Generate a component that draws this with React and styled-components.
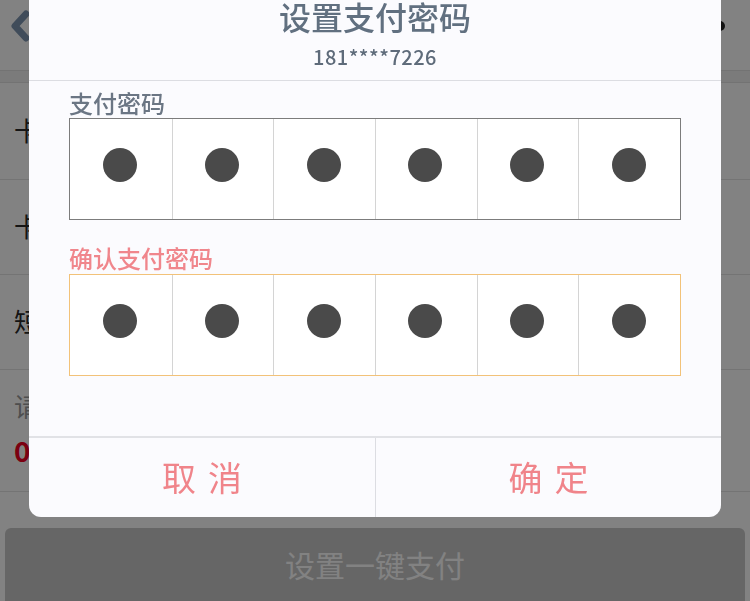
import styled, { createGlobalStyle } from 'styled-components'

const GlobalStyle = createGlobalStyle`
  html, body {
    margin: 0;
    padding: 0;
    background: #ffffff;
    font-family: "Noto Sans CJK SC", "Noto Sans", sans-serif;
  }
`

const FONT = '"Noto Sans CJK SC", "Noto Sans", sans-serif'

function BackIcon() {
  return (
    <svg width="22" height="32" viewBox="0 0 22 32">
      <path
        d="M16 4 L5 16 L16 28"
        fill="none"
        stroke="#7e95b0"
        strokeWidth="7"
        strokeLinecap="round"
        strokeLinejoin="round"
      />
    </svg>
  )
}

function PinBox({ tone, count = 6 }) {
  return (
    <Box tone={tone}>
      {Array.from({ length: count }).map((_, i) => (
        <Cell key={i}>
          <Dot />
        </Cell>
      ))}
    </Box>
  )
}

export default function App() {
  return (
    <>
      <GlobalStyle />
      <Page>
        <TopBar>
          <BackIcon />
          <MenuDot />
        </TopBar>
        <Band />
        <Row height={97}>
          <RowText>卡号</RowText>
        </Row>
        <Row height={95}>
          <RowText>卡类型</RowText>
        </Row>
        <Row height={95}>
          <RowText>短信验证码</RowText>
        </Row>
        <Row height={122} stacked>
          <RowText muted>请确认支付金额</RowText>
          <Amount>0.01</Amount>
        </Row>
        <SubmitButton>设置一键支付</SubmitButton>
      </Page>

      <Overlay>
        <Modal>
          <ModalHeader>
            <Title>设置支付密码</Title>
            <Phone>181****7226</Phone>
          </ModalHeader>
          <ModalBody>
            <Label>支付密码</Label>
            <PinBox tone="plain" />
            <Label tone="alert" gap={23}>
              确认支付密码
            </Label>
            <PinBox tone="focus" />
          </ModalBody>
          <Footer>
            <FooterButton>取消</FooterButton>
            <FooterButton>确定</FooterButton>
          </Footer>
        </Modal>
      </Overlay>
    </>
  )
}

const Page = styled.div`
  width: 750px;
  height: 601px;
  overflow: hidden;
  display: flex;
  flex-direction: column;
  background: #ffffff;
  font-family: ${FONT};
`

const TopBar = styled.div`
  height: 70px;
  flex: none;
  display: flex;
  align-items: center;
  justify-content: space-between;
  padding: 0 25px 18px 10px;
  box-sizing: border-box;
`

const MenuDot = styled.div`
  width: 10px;
  height: 10px;
  border-radius: 50%;
  background: #222;
`

const Band = styled.div`
  height: 11px;
  flex: none;
  background: #f1f1f1;
  border-top: 1px solid #e2e2e2;
  border-bottom: 1px solid #e2e2e2;
`

const Row = styled.div`
  height: ${({ height }) => height}px;
  flex: none;
  box-sizing: border-box;
  border-bottom: 1px solid #e4e4e4;
  padding: 0 14px 4px;
  display: flex;
  flex-direction: ${({ stacked }) => (stacked ? 'column' : 'row')};
  justify-content: ${({ stacked }) => (stacked ? 'center' : 'flex-start')};
  align-items: ${({ stacked }) => (stacked ? 'flex-start' : 'center')};
`

const RowText = styled.span`
  font-size: 26px;
  color: ${({ muted }) => (muted ? '#9a9a9a' : '#2a2a2a')};
`

const Amount = styled.span`
  font-size: 28px;
  font-weight: 700;
  color: #f20022;
  margin-top: 6px;
`

const SubmitButton = styled.div`
  margin: 36px 5px 0;
  height: 80px;
  flex: none;
  border-radius: 6px;
  background: #c8c8c8;
  color: #ffffff;
  font-size: 30px;
  display: flex;
  align-items: center;
  justify-content: center;
  padding-bottom: 8px;
  box-sizing: border-box;
`

const Overlay = styled.div`
  position: fixed;
  inset: 0;
  background: rgba(0, 0, 0, 0.49);
  display: flex;
  justify-content: center;
  align-items: flex-end;
  padding-bottom: 84px;
  box-sizing: border-box;
`

const Modal = styled.div`
  width: 692px;
  background: #fbfbfe;
  border-radius: 0 0 12px 12px;
  overflow: hidden;
  font-family: ${FONT};
`

const ModalHeader = styled.div`
  height: 81px;
  box-sizing: border-box;
  border-bottom: 1px solid #dcdde2;
  display: flex;
  flex-direction: column;
  align-items: center;
`

const Title = styled.div`
  font-size: 32px;
  line-height: 32px;
  font-weight: 500;
  color: #617080;
`

const Phone = styled.div`
  margin-top: 13px;
  font-size: 20px;
  line-height: 24px;
  font-weight: 500;
  letter-spacing: 0.5px;
  color: #5e6b7a;
`

const ModalBody = styled.div`
  padding: 7px 40px 60px;
`

const Label = styled.div`
  margin-top: ${({ gap }) => gap || 0}px;
  font-size: 24px;
  line-height: 30px;
  font-weight: 500;
  color: ${({ tone }) => (tone === 'alert' ? '#f0868c' : '#6b7684')};
`

const Box = styled.div`
  display: grid;
  grid-template-columns: repeat(6, 1fr);
  height: 102px;
  box-sizing: border-box;
  margin-top: ${({ tone }) => (tone === 'focus' ? 1 : 0)}px;
  border: 1px solid ${({ tone }) => (tone === 'focus' ? '#f2c279' : '#7c7c7c')};
  background: #ffffff;
`

const Cell = styled.div`
  display: flex;
  align-items: center;
  justify-content: center;
  padding: 0 2px 8px 0;
  & + & {
    border-left: 1px solid #d4d4d4;
  }
`

const Dot = styled.div`
  width: 34px;
  height: 34px;
  border-radius: 50%;
  background: #4a4a4a;
`

const Footer = styled.div`
  display: grid;
  grid-template-columns: 1fr 1fr;
  height: 81px;
  box-sizing: border-box;
  border-top: 2px solid #e1e2e6;
`

const FooterButton = styled.div`
  display: flex;
  align-items: center;
  justify-content: center;
  padding-bottom: 3px;
  font-size: 34px;
  letter-spacing: 12px;
  text-indent: 12px;
  color: #f0848a;
  & + & {
    border-left: 1px solid #dcdde2;
  }
`
